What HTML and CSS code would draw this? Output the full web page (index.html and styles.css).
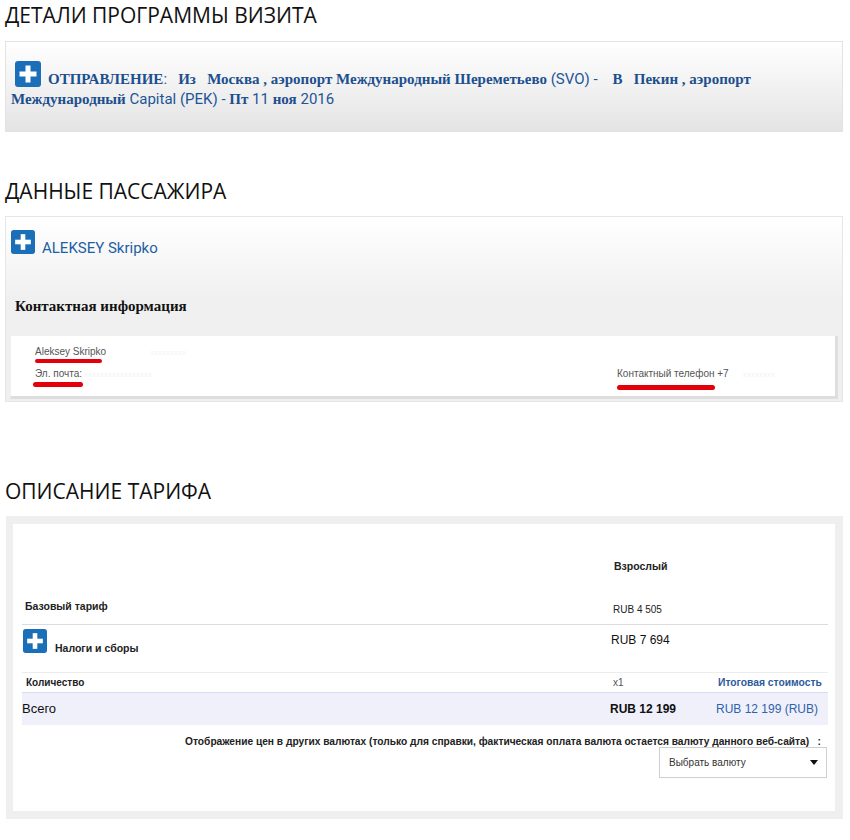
FILE: index.html
```html
<!DOCTYPE html>
<html lang="ru">
<head>
<meta charset="utf-8">
<title>Детали программы визита</title>
<link rel="stylesheet" href="styles.css">
</head>
<body>
<div class="page">
  <h2 class="section-title t1">ДЕТАЛИ ПРОГРАММЫ ВИЗИТА</h2>
  <div class="trip">
    <svg class="plus plus-lg" viewBox="0 0 26 26" aria-hidden="true"><rect width="26" height="26" rx="3" fill="#1b6fb9"/><rect x="10.5" y="4.5" width="5" height="17" fill="#fff"/><rect x="4.5" y="10.5" width="17" height="5" fill="#fff"/></svg><span class="cy">ОТПРАВЛЕНИЕ</span><span class="lat">:&nbsp;&nbsp;</span> <span class="cy">Из&nbsp;&nbsp;</span> <span class="cy">Москва</span> <span class="cy">, аэропорт</span> <span class="cy">Международный Шереметьево</span> <span class="lat">(SVO) -&nbsp;&nbsp;&nbsp;</span> <span class="cy">В&nbsp;&nbsp;</span> <span class="cy">Пекин</span> <span class="cy">, аэропорт</span> <span class="cy">Международный</span> <span class="lat">Capital (PEK) -</span> <span class="cy">Пт</span> <span class="lat">11</span> <span class="cy">ноя</span> <span class="lat">2016</span>
  </div>

  <h2 class="section-title t2">ДАННЫЕ ПАССАЖИРА</h2>
  <div class="pax">
    <div class="pax-name">
      <svg class="plus plus-md" viewBox="0 0 26 26" aria-hidden="true"><rect width="26" height="26" rx="3" fill="#1b6fb9"/><rect x="10.5" y="4.5" width="5" height="17" fill="#fff"/><rect x="4.5" y="10.5" width="17" height="5" fill="#fff"/></svg><span class="pax-title">ALEKSEY Skripko</span>
    </div>
    <h3 class="contact-head">Контактная информация</h3>
    <div class="contact">
      <div class="c-cell">
        <div class="c-text">Aleksey Skripko<span class="blur b-name">xxxxxxxxx</span></div>
        <span class="redline r-name"></span>
      </div>
      <div class="c-cell"></div>
      <div class="c-cell">
        <div class="c-text">Эл. почта:<span class="blur b-mail">xxxxxxxxxxxxxxxxx</span></div>
        <span class="redline r-mail"></span>
      </div>
      <div class="c-cell">
        <div class="c-text">Контактный телефон +7<span class="blur b-phone">xxxxxxxx</span></div>
        <span class="redline r-phone"></span>
      </div>
    </div>
  </div>

  <h2 class="section-title t3">ОПИСАНИЕ ТАРИФА</h2>
  <div class="fare">
    <div class="fare-inner">
      <div class="frow row-head">
        <div></div>
        <div class="th">Взрослый</div>
        <div></div>
      </div>
      <div class="frow row-base">
        <div class="lbl">Базовый тариф</div>
        <div class="val-sm">RUB 4 505</div>
        <div></div>
      </div>
      <div class="frow row-tax">
        <div class="lbl tax-lbl"><svg class="plus plus-sm" viewBox="0 0 26 26" aria-hidden="true"><rect width="26" height="26" rx="3" fill="#1b6fb9"/><rect x="10.5" y="4.5" width="5" height="17" fill="#fff"/><rect x="4.5" y="10.5" width="17" height="5" fill="#fff"/></svg>Налоги и сборы</div>
        <div class="val-md">RUB 7 694</div>
        <div></div>
      </div>
      <div class="frow row-qty">
        <div class="lbl">Количество</div>
        <div class="qty">x1</div>
        <div class="total-head">Итоговая стоимость</div>
      </div>
      <div class="frow row-total">
        <div class="tot-lbl">Всего</div>
        <div class="tot-val">RUB 12 199</div>
        <div class="tot-sum">RUB 12 199 (RUB)</div>
      </div>
      <div class="note">Отображение цен в других валютах (только для справки, фактическая оплата валюта остается валюту данного веб-сайта)&nbsp;&nbsp;&nbsp;:</div>
      <div class="select"><span>Выбрать валюту</span><span class="caret"></span></div>
    </div>
  </div>
</div>
</body>
</html>
```

FILE: styles.css
```css
* { box-sizing: border-box; }
html, body { margin: 0; padding: 0; background: #fff; }
body { font-family: "Liberation Sans", Arial, sans-serif; color: #111; }

.page { padding: 0 7px 0 5px; width: 850px; }

.section-title {
  margin: 0;
  font: 400 21px/30px "Open Sans", sans-serif;
  color: #111;
}
.t1 { margin-bottom: 11px; }
.t2 { margin-top: 44px; margin-bottom: 10px; }
.t3 { margin-top: 74px; margin-bottom: 10px; }

.plus { display: inline-block; }
.plus-lg { width: 26px; height: 26px; vertical-align: -3px; margin: 0 7px 0 4px; }
.plus-md { width: 24px; height: 24px; vertical-align: -1px; margin: 0 7px 0 1px; }
.plus-sm { width: 24px; height: 24px; vertical-align: -1px; margin: 0 8px 0 0; }

/* trip box */
.trip {
  border: 1px solid #e2e2e2;
  background: linear-gradient(#ffffff, #e4e4e4);
  padding: 19px 10px 22px 5px;
  font: 700 15px/20px "Liberation Serif", "Times New Roman", serif;
  color: #1c4f8e;
}
.cy { font: 700 15px/20px "Liberation Serif", "Times New Roman", serif; }
.lat { font: 400 15px/20px Roboto, "Liberation Sans", sans-serif; color: #1d5598; }

/* passenger box */
.pax {
  border: 1px solid #e6e6e6;
  background: linear-gradient(#ffffff 0, #f0f0f0 80px);
  padding: 13px 4px 2px 4px;
}
.pax-name { line-height: 18px; }
.pax-title { font: 400 15px Roboto, "Liberation Sans", sans-serif; color: #1d5fa3; }
.contact-head {
  margin: 39px 0 20px 5px;
  font: 700 15px/20px "Liberation Serif", "Times New Roman", serif;
  color: #111;
}
.contact {
  background: #fff;
  border-left: 1px solid #f0f0f0;
  border-right: 3px solid #dedede;
  border-bottom: 3px solid #dedede;
  padding: 9px 0 6px 24px;
  display: grid;
  grid-template-columns: 582px 1fr;
}
.c-text { font-size: 10px; line-height: 13px; color: #555; white-space: nowrap; }
.c-cell:nth-child(3), .c-cell:nth-child(4) { margin-top: 4px; }
.redline { display: block; height: 4px; border-radius: 3px; background: #e3000b; }
.r-name { width: 67px; }
.r-mail { width: 50px; margin-left: -2px; margin-top: 1px; height: 5px; }
.r-phone { width: 98px; margin-top: 4px; height: 5px; }
.blur { color: #f3f3f3; margin-left: 4px; }
.b-name { margin-left: 44px; font-size: 8px; }
.b-mail { font-size: 8px; margin-left: 2px; }
.b-phone { margin-left: 14px; font-size: 8px; }

/* fare box */
.fare {
  margin-left: 1px;
  background: #efefef;
  padding: 8px 8px 8px 7px;
}
.fare-inner {
  background: #fff;
  padding: 0 7px 33px 9px;
}
.frow {
  display: grid;
  grid-template-columns: 588px 106px 1fr;
}
.row-head { height: 65px; }
.th { padding: 36px 0 0 4px; font-weight: 700; font-size: 10.5px; line-height: 12px; color: #222; }
.row-base { height: 36px; border-bottom: 1px solid #dcdcdc; }
.lbl { font-weight: 700; font-size: 10.5px; line-height: 12px; color: #222; padding-left: 3px; }
.row-base .lbl { padding-top: 11px; }
.val-sm { padding: 15px 0 0 3px; font-size: 10px; line-height: 12px; color: #222; }
.row-tax { height: 48px; border-bottom: 1px solid #ececec; }
.tax-lbl { padding: 4px 0 0 1px; line-height: 24px; }
.val-md { padding: 8px 0 0 1px; font-size: 12px; line-height: 14px; color: #111; }
.row-qty { height: 20px; border-bottom: 1px solid #dadaf0; padding-top: 1px; }
.row-qty > div { line-height: 18px; }
.row-qty .lbl { font-size: 10px; padding-left: 4px; }
.qty { font-size: 10px; color: #555; padding-left: 3px; }
.total-head { font-size: 10.3px; font-weight: 700; color: #2c5b9b; padding-left: 2px; }
.row-total { height: 32px; background: #f0f0fb; line-height: 32px; }
.tot-lbl { font-size: 13px; color: #111; }
.tot-val { font-size: 12px; font-weight: 700; color: #111; }
.tot-sum { font-size: 12px; color: #2f63a8; }
.note {
  margin-top: 10px;
  text-align: right;
  padding-right: 7px;
  font-weight: 700;
  font-size: 10.2px;
  line-height: 14px;
  color: #222;
  white-space: nowrap;
}
.select {
  width: 168px;
  height: 31px;
  margin: -2px 1px 0 auto;
  border: 1px solid #cfcfcf;
  display: flex;
  align-items: center;
  justify-content: space-between;
  padding: 0 8px 0 9px;
  font-size: 10px;
  color: #333;
  background: #fff;
}
.caret {
  width: 0; height: 0;
  border-left: 4.5px solid transparent;
  border-right: 4.5px solid transparent;
  border-top: 5px solid #111;
}
```
